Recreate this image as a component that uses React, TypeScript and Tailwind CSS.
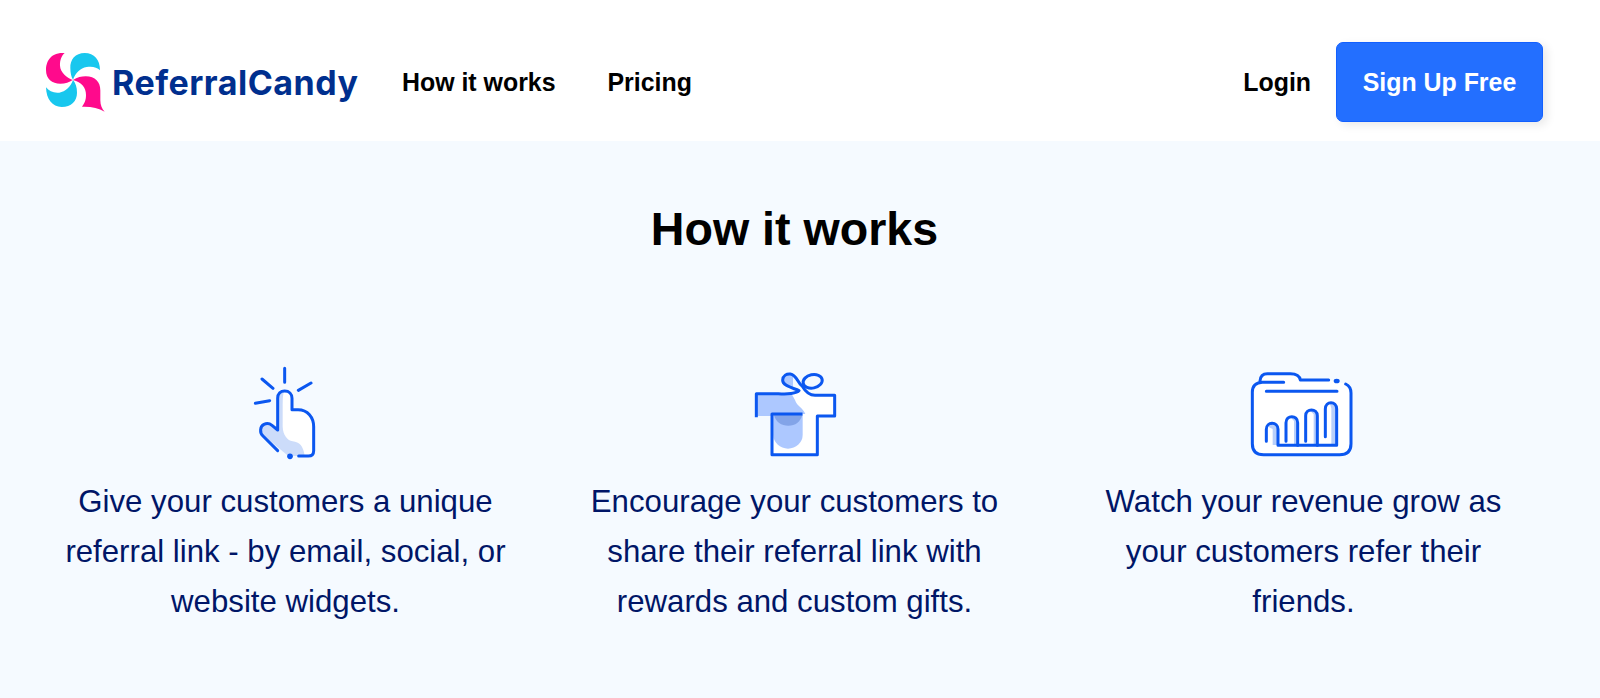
import type { ReactNode } from 'react';

function LogoMark() {
  return (
    <svg viewBox="0 0 180 180" className="mt-[2px] h-[60px] w-[60px] shrink-0" aria-hidden="true">
      <path d="M50 0C10 0 0 30 0 51C0 78 18 92 43 92C58 92 70 88 80 81C62 74 43 58 42 38C41 22 47 7 56 0Z" fill="#ff0a8c" />
      <path d="M162 52C162 20 145 0 116 0C88 0 72 20 73 45C73 60 76 72 81 80C88 60 103 45 122 42C140 39 153 43 162 52Z" fill="#18c7ee" />
      <path d="M0 103C1 139 19 162 47 162C76 162 93 144 93 119C93 103 89 90 81 81C74 101 58 116 40 119C23 121 9 115 0 103Z" fill="#18c7ee" />
      <path d="M81 81C94 73 106 70 119 70C148 70 163 87 163 112V142C163 156 168 169 176 176C157 165 136 160 108 161C115 151 120 143 120 126C120 103 107 88 81 81Z" fill="#ff0a8c" />
    </svg>
  );
}

function TapIcon() {
  return (
    <svg viewBox="0 0 270 345" className="mr-[2px] h-[115px] w-[90px]" fill="none" aria-hidden="true">
      <path d="M113 225V130Q113 108 134 108Q156 108 156 130V164H174C205 164 221 187 221 215V287Q221 303 205 303H150L66 238Q58 222 67 211Q80 200 96 208Z" fill="#fff" />
      <path d="M113 225V130Q113 110 132 108Q128 120 128 150V215C129 240 142 256 158 259C178 262 190 272 194 303H145L66 238Q58 222 67 211Q80 200 96 208Z" fill="#ccdcfa" />
      <g stroke="#0b57f0" strokeWidth="9" strokeLinecap="round" strokeLinejoin="round">
        <path d="M134 40V82M66 72L99 100M46 145L89 137M175 106L213 84" />
        <path d="M113 287L69 243C58 232 60 214 72 208C82 203 90 206 96 211L113 225V130C113 116 122 108 134 108C147 108 156 117 156 130V164H174C203 164 221 187 221 215V287Q221 303 205 303H176" />
      </g>
      <circle cx="150" cy="304" r="8.5" fill="#0b57f0" />
    </svg>
  );
}

function GiftIcon() {
  return (
    <svg viewBox="0 -15 330 345" className="h-[115px] w-[110px]" fill="none" aria-hidden="true">
      <path d="M49 102H150L188 78L205 105H284V168H232V284H96V168H49Z" fill="#fff" />
      <path d="M49 102H155L165 120C170 138 190 144 196 162H96V168H49Z" fill="#adc8ff" />
      <path d="M159 44V84L177 91C156 82 130 78 128 59Q132 40 159 44Z" fill="#adc8ff" />
      <path d="M100 162H188V224A44 42 0 0 1 100 224Z" fill="#adc8ff" />
      <path d="M102 165H187C181 186 166 197 145 197C124 197 107 186 102 165Z" fill="#83a4e8" />
      <g stroke="#0b57f0" strokeWidth="9" strokeLinejoin="round" strokeLinecap="square">
        <path d="M49 167V101H115C141 104 171 100 177 92C160 84 127 78 128 60C129 46 140 41 151 42C171 45 172 69 187 79C198 98 211 106 225 106H284V168H232V284H96V162H183" />
        <ellipse cx="218" cy="64" rx="29" ry="20" transform="rotate(-12 218 64)" />
      </g>
    </svg>
  );
}

function RevenueIcon() {
  return (
    <svg viewBox="0 -15 375 345" className="mr-[2px] h-[115px] w-[125px]" fill="none" aria-hidden="true">
      <path d="M37 94Q37 68 59 66Q61 41 80 41H158Q175 43 180 60H267L318 72Q333 80 333 96V255Q333 284 300 284H70Q37 284 37 250Z" fill="#fff" />
      <path d="M86 201Q88 192 100 192Q114 194 114 208V255H98V207ZM153 173Q172 172 173 188V255H162V183ZM211 153Q231 150 232 167V255H221V163ZM270 132Q289 130 290 146V255H274V145Z" fill="#b8cffa" />
      <g stroke="#0b57f0" strokeWidth="9" strokeLinecap="round" strokeLinejoin="round">
        <path d="M131 67H67C47 68 37 79 37 97V251C37 272 49 284 71 284H299C321 284 333 272 333 251V99C333 86 328 77 317 72" />
        <path d="M60 63C61 47 69 41 82 41H151C170 41 179 48 181 60H266M79 94H291" />
        <path d="M79 244V208C79 184 114 184 114 208V256H290V147C290 122 256 122 256 147V230" />
        <path d="M138 244V188C138 164 173 164 173 188V256M197 244V167C197 144 232 144 232 167V256" />
      </g>
      <ellipse cx="290" cy="63" rx="9" ry="7" fill="#0b57f0" />
    </svg>
  );
}

function Step({ icon, lines }: { icon: ReactNode; lines: string[] }) {
  return (
    <div className="flex flex-col items-center">
      {icon}
      <p className="mt-[7px] text-center text-[31.2px] leading-[50px] whitespace-nowrap text-[#001667]">
        {lines.map((line) => (
          <span key={line} className="block">
            {line}
          </span>
        ))}
      </p>
    </div>
  );
}

const steps = [
  {
    icon: <TapIcon />,
    lines: ['Give your customers a unique', 'referral link - by email, social, or', 'website widgets.'],
  },
  {
    icon: <GiftIcon />,
    lines: ['Encourage your customers to', 'share their referral link with', 'rewards and custom gifts.'],
  },
  {
    icon: <RevenueIcon />,
    lines: ['Watch your revenue grow as', 'your customers refer their', 'friends.'],
  },
];

export default function App() {
  return (
    <div className="flex h-[698px] flex-col overflow-hidden bg-[#f5faff] font-['Liberation_Sans',Arial,sans-serif]">
      <header className="flex h-[141px] shrink-0 items-center bg-white pt-[23px] pr-[57px] pl-[46px] text-[24.9px] font-bold text-black">
        <a href="#" className="flex items-center">
          <LogoMark />
          <span className="ml-[6px] w-[248px] font-['Inter',sans-serif] text-[34px] font-bold tracking-[0.5px] whitespace-nowrap text-[#002f8e]">
            ReferralCandy
          </span>
        </a>
        <nav className="ml-[42px] flex gap-[52px] pt-px whitespace-nowrap">
          <a href="#">How it works</a>
          <a href="#">Pricing</a>
        </nav>
        <div className="ml-auto flex items-center gap-[25px] whitespace-nowrap">
          <a href="#" className="pt-px">
            Login
          </a>
          <a
            href="#"
            className="flex h-20 w-[207px] items-center justify-center rounded-[7px] border border-[#1260ff] bg-[#236fff] pt-px text-white shadow-[4px_3px_10px_rgba(0,0,0,0.09)]"
          >
            Sign Up Free
          </a>
        </div>
      </header>
      <main className="pr-[42px] pl-[31px]">
        <h2 className="mt-[61px] text-center text-[46.6px] leading-[54px] font-bold text-black">How it works</h2>
        <div className="mt-[99px] grid grid-cols-3">
          {steps.map((step) => (
            <Step key={step.lines[0]} icon={step.icon} lines={step.lines} />
          ))}
        </div>
      </main>
    </div>
  );
}
